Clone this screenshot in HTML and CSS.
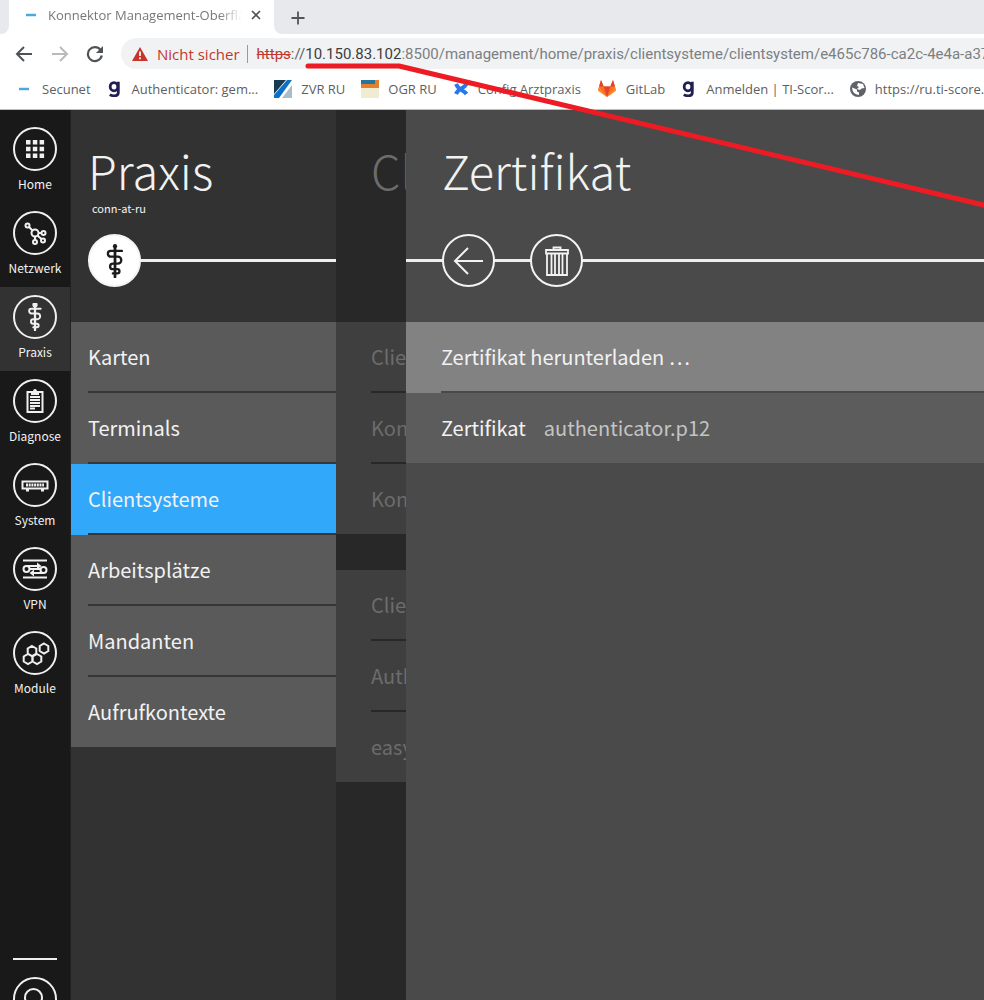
FILE: index.html
```html
<!DOCTYPE html>
<html lang="de">
<head>
<meta charset="utf-8">
<title>Konnektor Management-Oberfläche</title>
<link rel="stylesheet" href="styles.css">
</head>
<body>
<svg class="symbols" aria-hidden="true">
  <symbol id="staff" viewBox="-16 -16 32 32">
    <g fill="none" stroke="currentColor" stroke-width="2.2" stroke-linecap="round">
      <path d="M0-14V15" stroke-width="2.6"/>
      <path d="M6.500-9.500H-4a2.500 2.500 0 0 0 0 5.400H2.600a3.200 3.200 0 0 1 0 6.600H-2a2.600 2.600 0 0 0 0 5.200H2.200a2 2 0 0 1 0 4H-2"/>
    </g>
    <circle cy="-14" r="2" fill="currentColor"/>
  </symbol>
  <symbol id="letter-g" viewBox="0 0 16 16">
    <g fill="none" stroke="#221f55" stroke-width="2.8">
      <ellipse cx="7" cy="5.7" rx="3.8" ry="4.1"/>
      <path d="M11.3.8V11.5Q11.3 14.8 7.2 14.8 4.500 14.8 2.800 13.600"/>
    </g>
  </symbol>
</svg>

<header class="browser">
  <div class="tabstrip">
    <div class="strip-edge left"></div>
    <div class="tab">
      <svg width="12" height="12" viewBox="0 0 12 12"><path d="M1 6h10" stroke="#4fa8dc" stroke-width="2.500"/></svg>
      <span class="tab-title">Konnektor Management-Oberfläche</span>
      <button class="plain" aria-label="Tab schließen"><svg width="12" height="12" viewBox="0 0 12 12"><path d="M2 2l8 8M10 2l-8 8" stroke="#555" stroke-width="1.700"/></svg></button>
    </div>
    <div class="strip-edge right">
      <button class="plain" aria-label="Neuer Tab"><svg width="14" height="14" viewBox="0 0 14 14"><path d="M7 .5v13M.5 7h13" stroke="#555" stroke-width="1.800"/></svg></button>
    </div>
  </div>

  <div class="toolbar">
    <button class="plain" aria-label="Zurück"><svg width="18" height="18" viewBox="0 0 18 18"><path d="M17 9H2M9 2L2 9l7 7" fill="none" stroke="#505356" stroke-width="2"/></svg></button>
    <button class="plain" aria-label="Vorwärts"><svg width="18" height="18" viewBox="0 0 18 18"><path d="M1 9h15M9 2l7 7-7 7" fill="none" stroke="#b8babc" stroke-width="2"/></svg></button>
    <button class="plain" aria-label="Neu laden"><svg width="18" height="18" viewBox="0 0 18 18"><path d="M14.500 4.800A7 7 0 1 0 15.800 10.500" fill="none" stroke="#505356" stroke-width="2.200"/><path d="M17 1v7h-7z" fill="#505356"/></svg></button>
    <label class="omnibox">
      <svg width="16" height="14" viewBox="0 0 16 14"><path d="M8 0l8 14H0z" fill="#c5352b"/><path d="M8 4.500v4.500M8 10.300v1.900" stroke="#fff" stroke-width="1.700"/></svg>
      <span class="insecure">Nicht sicher</span>
      <span class="bar"></span>
      <span class="scheme"><s>https</s>://</span><span class="host">10.150.83.102</span><input class="path" type="text" value=":8500/management/home/praxis/clientsysteme/clientsystem/e465c786-ca2c-4e4a-a37" aria-label="Adresse">
    </label>
  </div>

  <nav class="bookmarks" aria-label="Lesezeichen">
    <a href="#"><svg width="18" height="18" viewBox="0 0 18 18"><path d="M4 9h10" stroke="#4fa8dc" stroke-width="2.500"/></svg>Secunet</a>
    <a href="#"><svg width="16" height="16"><use href="#letter-g"/></svg>Authenticator: gem...</a>
    <a href="#"><svg width="18" height="18" viewBox="0 0 18 18"><path d="M0 0h12L0 14z" fill="#173b50"/><path d="M13 0h5L5 18H0v-3z" fill="#0c70c9"/><path d="M18 5v13H8z" fill="#a9bdc9"/></svg>ZVR RU</a>
    <a href="#"><svg width="18" height="18" viewBox="0 0 18 18"><path d="M0 0h18v18H0z" fill="#f0ecd4"/><path d="M0 0h18v8H0z" fill="#e57e2d"/><path d="M0 0h14v4H0z" fill="#25759b"/></svg>OGR RU</a>
    <a href="#"><svg width="16" height="16" viewBox="0 0 16 16"><path d="M3 3C6 10 10 8 13.500 13M3 13C6 6 10 9 13.500 3" fill="none" stroke="#2878ea" stroke-width="4"/></svg>Config Arztpraxis</a>
    <a href="#"><svg width="20" height="18" viewBox="0 0 20 18"><path d="M4 0l2.700 6.500h6.600L16 0l3 10.500L10 17 1 10.500z" fill="#fc6d26"/><path d="M4 0l2.700 6.500H2zM16 0l2 6.500h-4.700zM6.700 6.500h6.600L10 17z" fill="#e24329"/><path d="M2 7l8 10-9-6.500zM18 7l-8 10 9-6.500z" fill="#fc8a26"/></svg>GitLab</a>
    <a href="#"><svg width="16" height="16"><use href="#letter-g"/></svg>Anmelden | TI-Scor...</a>
    <a href="#"><svg width="16" height="16" viewBox="0 0 16 16"><circle cx="8" cy="8" r="8" fill="#5f6368"/><path d="M2 6.500l5 2v2l2 1v2.500Q2.500 13.500 2 6.500zM8 2l5 1 1.500 4-3 .5-1.500 1.500-3-1 2-2-2-1z" fill="#fff"/></svg>https://ru.ti-score.de</a>
  </nav>
</header>

<div class="app">
  <nav class="rail" aria-label="Hauptmenü">
    <a href="#"><svg class="ring" viewBox="-22 -22 44 44"><circle r="21"/><path class="solid" d="M-9-9h4.500v4.500H-9zM-2.200-9h4.500v4.500h-4.500zM4.600-9h4.500v4.500H4.600zM-9-2.200h4.500v4.500H-9zM-2.200-2.200h4.500v4.500h-4.500zM4.600-2.200h4.500v4.500H4.600zM-9 4.600h4.500v4.500H-9zM-2.200 4.600h4.500v4.500h-4.500zM4.600 4.600h4.500v4.500H4.600z"/></svg>Home</a>
    <a href="#"><svg class="ring" viewBox="-22 -22 44 44"><circle r="21"/><circle r="3.500"/><circle cx="-7.500" cy="-7.500" r="2"/><circle cx="8.500" cy="0" r="2"/><circle cx="8" cy="7.500" r="2"/><circle cx="0" cy="9" r="2"/><path d="M-6-6l3.500 3.500M3.500 0h3M2.500 2.500l4 3.600M0 3.500V7"/></svg>Netzwerk</a>
    <a href="#" class="active" aria-current="page"><svg class="ring" viewBox="-22 -22 44 44"><circle r="21"/><use href="#staff" x="-14" y="-14" width="28" height="28"/></svg>Praxis</a>
    <a href="#"><svg class="ring" viewBox="-22 -22 44 44"><circle r="21"/><path d="M-7.500-9H7.500V11H-7.500zM-5-4H5M-5-1H5M-5 2H5M-5 5H5M-5 7.500H0"/><path class="solid" d="M-4-6v-3h2q0-3 2-3t2 3h2v3z"/></svg>Diagnose</a>
    <a href="#"><svg class="ring" viewBox="-22 -22 44 44"><circle r="21"/><path d="M-12.500-3.500H12.500V3.500H-12.500zM-9 5.500h3M6 5.500h3"/><path d="M-9 0H9" stroke-width="3" stroke-dasharray="2 .7"/></svg>System</a>
    <a href="#"><svg class="ring" viewBox="-22 -22 44 44"><circle r="21"/><path d="M-12-8.500H12M-12 8.500H12"/><circle cx="-8.500" cy="0" r="3"/><circle cx="8.500" cy="1" r="3"/><path d="M-8.500-3H3M8.500 4H-3M-5.500 0H0M5.500 0H0"/><path class="solid" d="M2-6.500l4.500 3.500L2 .5zM-1 .5L-5.500 4-1 7.500z"/></svg>VPN</a>
    <a href="#"><svg class="ring" viewBox="-22 -22 44 44"><circle r="21"/><path d="M-3-7l4.300 2.500v5L-3 3l-4.300-2.500v-5zM9-9.500l4.300 2.500v5L9 .5 4.700-2v-5zM-7 1l4.300 2.500v5L-7 11l-4.300-2.500v-5zM2 1l4.300 2.500v5L2 11l-4.300-2.500v-5z"/></svg>Module</a>
    <div class="rail-foot"><a href="#" aria-label="Benutzer"><svg class="ring" viewBox="-22 -22 44 44"><circle r="21"/><circle cx="-1.500" cy="-1.500" r="8.500"/></svg></a></div>
  </nav>

  <section class="panel praxis">
    <header class="panel-head">
      <h1>Praxis</h1>
      <p>conn-at-ru</p>
      <div class="steps"><span class="step filled"><svg width="34" height="34"><use href="#staff"/></svg></span></div>
    </header>
    <ul class="rows">
      <li><button>Karten</button></li>
      <li><button>Terminals</button></li>
      <li class="selected"><button>Clientsysteme</button></li>
      <li><button>Arbeitsplätze</button></li>
      <li><button>Mandanten</button></li>
      <li><button>Aufrufkontexte</button></li>
    </ul>
  </section>

  <section class="panel dimmed">
    <header class="panel-head"><h2>Clie</h2></header>
    <ul class="rows">
      <li><button>Clie</button></li>
      <li><button>Kon</button></li>
      <li><button>Kon</button></li>
    </ul>
    <ul class="rows">
      <li><button>Clie</button></li>
      <li><button>Auth</button></li>
      <li><button>easy</button></li>
    </ul>
  </section>

  <main class="panel detail">
    <header class="panel-head">
      <h2>Zertifikat</h2>
      <div class="steps">
        <button class="step" aria-label="Zurück"><svg width="34" height="34" viewBox="-17 -17 34 34"><path d="M14 0H-14M-1-13L-14 0-1 13" fill="none" stroke="currentColor" stroke-width="2"/></svg></button>
        <button class="step" aria-label="Löschen"><svg width="34" height="34" viewBox="-17 -17 34 34"><path d="M-10-8.500V14H10V-8.500M-11-11H11v3.500H-11zM-3.500-11v-2.500h7v2.500M-5.500-7V14M-2-7V14M2-7V14M5.500-7V14" fill="none" stroke="currentColor" stroke-width="1.800"/></svg></button>
      </div>
    </header>
    <ul class="rows">
      <li class="download"><button>Zertifikat herunterladen …</button></li>
      <li><div class="field"><span>Zertifikat</span><span class="value">authenticator.p12</span></div></li>
    </ul>
  </main>
</div>

<svg class="annotation" width="984" height="220" viewBox="0 0 984 220" aria-hidden="true"><path d="M308 66H399L990 206.500" fill="none" stroke="#ed1c24" stroke-width="5" stroke-linecap="round" stroke-linejoin="round"/></svg>
</body>
</html>
```

FILE: styles.css
```css
* { box-sizing: border-box; }

body {
  margin: 0;
  height: 100vh;
  display: flex;
  flex-direction: column;
  overflow: hidden;
  position: relative;
  font-family: "Noto Sans CJK SC", "Noto Sans", sans-serif;
  color: #f2f2f2;
}

a { color: inherit; text-decoration: none; }
button { font: inherit; color: inherit; background: none; border: 0; padding: 0; text-align: left; }
svg { flex: none; display: block; }
h1, h2, p, ul { margin: 0; padding: 0; }
.symbols { position: absolute; width: 0; height: 0; }
.annotation { position: absolute; top: 0; left: 0; pointer-events: none; }

/* Browser chrome */
.browser {
  flex: none;
  background: #fff;
  color: #5c5f62;
  font-family: "Open Sans", "Noto Sans", sans-serif;
  border-bottom: 1px solid #bdbdbd;
}
.tabstrip { display: flex; height: 34px; background: #fff; }
.strip-edge { background: #e8e9ec; }
.strip-edge.left { width: 9px; border-bottom-right-radius: 8px; }
.strip-edge.right { flex: 1; border-bottom-left-radius: 8px; padding: 8px 17px; }
.tab { width: 265px; display: flex; align-items: center; padding: 0 12px 4px 16px; }
.tab-title {
  flex: 1;
  margin: 0 8px 0 11px;
  font-size: 13px;
  line-height: 20px;
  white-space: nowrap;
  overflow: hidden;
  color: #777;
  mask-image: linear-gradient(to right, #000 88%, transparent);
}
.toolbar { display: flex; align-items: center; gap: 18px; height: 39px; padding-left: 15px; }
.toolbar .plain + .plain { margin-right: -1px; }
.omnibox {
  flex: 1;
  min-width: 0;
  display: flex;
  align-items: center;
  height: 31px;
  padding-left: 11px;
  border-radius: 16px 0 0 16px;
  background: #f1f2f4;
  font-size: 15px;
  line-height: 20px;
  white-space: nowrap;
  overflow: hidden;
}
.insecure { margin-left: 9px; color: #c0392f; }
.bar { width: 1px; height: 18px; margin: 0 9px 0 7px; background: #999; }
.scheme, .host, .path { font-family: Roboto, "Open Sans", sans-serif; }
.scheme s { color: #c0392f; }
.host { color: #3c3e40; }
.path {
  flex: 1;
  min-width: 0;
  padding: 0;
  border: 0;
  background: none;
  font-size: 15px;
  line-height: 20px;
  color: #7c7f82;
}
.bookmarks { display: flex; height: 36px; align-items: center; gap: 16px; padding: 0 0 4px 15px; font-size: 13px; line-height: 20px; white-space: nowrap; overflow: hidden; }
.bookmarks a { display: flex; align-items: center; gap: 9px; }

/* Application */
.app { flex: 1; min-height: 0; display: flex; }
.rail {
  width: 71px;
  flex: none;
  display: flex;
  flex-direction: column;
  padding-top: 9px;
  background: #191919;
  border-right: 1px solid #222;
  font-size: 12px;
  font-weight: 400;
  line-height: 20px;
  text-align: center;
}
.rail > a { flex: none; height: 84px; padding-top: 8px; }
.rail > .active { background: #323232; }
.ring { width: 44px; height: 44px; margin: 0 auto 3px; fill: none; stroke: #f0f0f0; stroke-width: 2; color: #f0f0f0; }
.ring .solid { fill: #f0f0f0; stroke: none; }
.rail-foot { margin: auto 13px 0; height: 42px; padding-top: 17px; border-top: 2px solid #eee; overflow: hidden; }

.panel { overflow: hidden; }
.panel-head { height: 212px; display: flex; flex-direction: column; padding: 32px 0 35px 17px; overflow: hidden; }
.panel h1, .panel h2 { font-size: 47px; font-weight: 300; line-height: 56px; white-space: nowrap; }
.panel-head p { padding-left: 4px; font-size: 11px; line-height: 20px; }
.steps {
  display: flex;
  gap: 35px;
  height: 53px;
  margin-top: auto;
  background: linear-gradient(#eee, #eee) 0 center / 100% 3px no-repeat;
}
.step { width: 53px; height: 53px; border: 2px solid #f4f4f4; border-radius: 50%; display: flex; align-items: center; justify-content: center; }
.rows { list-style: none; font-size: 20px; line-height: 28px; white-space: nowrap; }
.rows li { padding-left: 17px; background: #5a5a5a; }
.rows button, .field { display: block; width: 100%; height: 71px; border-bottom: 2px solid #363636; overflow: hidden; }
.rows li:last-child button, .rows li:last-child .field { height: 70px; border-bottom: 0; }

.praxis { flex: 0 0 265px; background: #323232; }
.filled { background: #fff; color: #1c1c1c; }
.rows .selected { background: #31a8fa; }

.dimmed { flex: 0 0 70px; background: #282828; color: #6c6c6c; }
.dimmed .panel-head { padding-left: 35px; }
.dimmed .rows li, .detail .rows li { padding-left: 35px; }
.dimmed .rows li { background: #3f3f3f; }
.dimmed .rows button { border-color: #282828; }
.dimmed .rows + .rows { margin-top: 36px; }

.detail { flex: 1; background: #4a4a4a; }
.detail .panel-head { padding-left: 0; }
.detail h2 { padding-left: 36px; }
.detail .steps { padding-left: 36px; }
.detail .step { background: #4a4a4a; }
.detail .rows li { background: #5c5c5c; }
.detail .rows .download { background: #828282; }
.detail .rows button { border-color: #4a4a4a; }
.rows .field { display: flex; align-items: center; gap: 18px; }
.value { color: #c4c4c4; }
```
